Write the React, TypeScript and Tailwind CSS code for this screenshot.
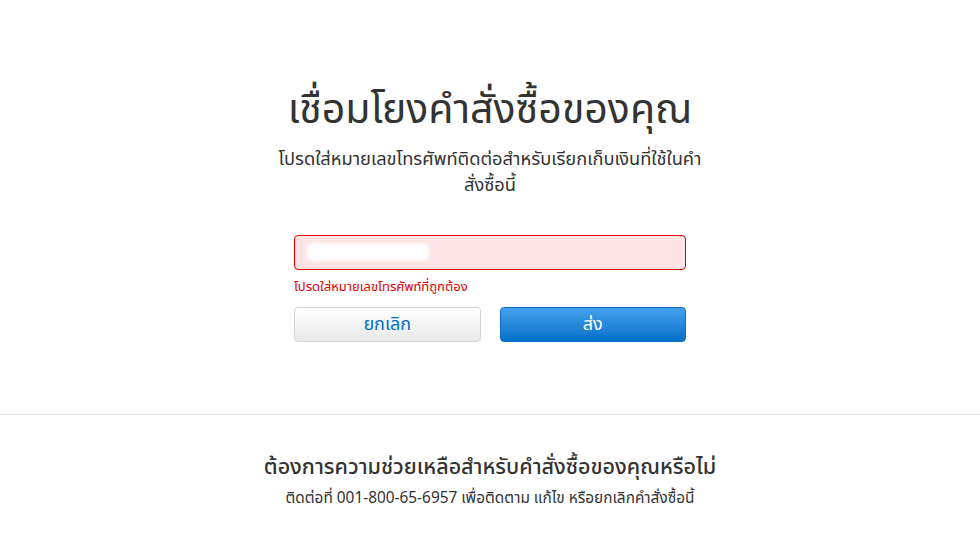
import React from "react"

export default function App() {
  return (
    <div className="min-h-[550px] bg-white font-['Noto_Sans_Thai','Noto_Sans',sans-serif] text-[#333333]">
      <main className="flex flex-col items-center pt-[84px]">
        <h1 className="text-[41px] leading-[52px] font-normal text-[#333333]">เชื่อมโยงคำสั่งซื้อของคุณ</h1>
        <p className="mt-[11px] w-[436px] text-center text-[18.3px] leading-[26px]">
          โปรดใส่หมายเลขโทรศัพท์ติดต่อสำหรับเรียกเก็บเงินที่ใช้ในคำสั่งซื้อนี้
        </p>

        <form className="mt-[36px] w-[392px]" onSubmit={(e) => e.preventDefault()}>
          <div className="relative h-[35px] rounded-[4px] border border-[#e00000] bg-[#fde3e3]">
            <div className="absolute left-[12px] top-[7px] h-[18px] w-[122px] rounded-[6px] bg-white blur-[2px]" />
          </div>
          <p className="mt-[8px] text-[13px] leading-[18px] text-[#e00000]">โปรดใส่หมายเลขโทรศัพท์ที่ถูกต้อง</p>
          <div className="mt-[11px] flex gap-[19px]">
            <button
              type="button"
              className="h-[35px] flex-1 rounded-[4px] border border-[#d6d6d6] bg-gradient-to-b from-[#ffffff] to-[#e8e8e8] text-[18px] text-[#0070c9]"
            >
              ยกเลิก
            </button>
            <button
              type="submit"
              className="h-[35px] flex-1 rounded-[4px] border border-[#0f6ecd] bg-gradient-to-b from-[#42a1ec] to-[#0070c9] text-[18px] text-white"
            >
              ส่ง
            </button>
          </div>
        </form>
      </main>

      <div className="mt-[72px] border-t border-[#e3e3e3]" />

      <footer className="flex flex-col items-center pt-[38px]">
        <h2 className="text-[21.5px] leading-[30px] font-medium text-[#333333]">ต้องการความช่วยเหลือสำหรับคำสั่งซื้อของคุณหรือไม่</h2>
        <p className="mt-[6px] text-[15.4px] leading-[20px]">ติดต่อที่ 001-800-65-6957 เพื่อติดตาม แก้ไข หรือยกเลิกคำสั่งซื้อนี้</p>
      </footer>
    </div>
  )
}
